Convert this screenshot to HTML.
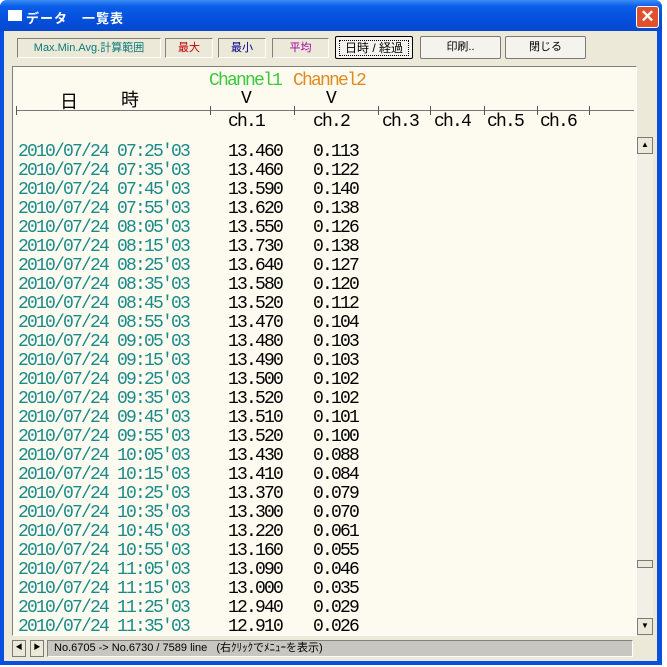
<!DOCTYPE html>
<html><head><meta charset="utf-8"><style>
*{margin:0;padding:0;box-sizing:border-box}
body{width:667px;height:667px;overflow:hidden;background:#fff;position:relative;font-family:"Liberation Sans","Noto Sans CJK JP",sans-serif}
.abs{position:absolute}
#win{left:0;top:0;width:662px;height:665px;background:#0a4ee0;border-radius:7px 7px 0 0}
#title{left:0;top:0;width:662px;height:31px;border-radius:7px 7px 0 0;background:linear-gradient(#3d8df5 0%,#0a5ee8 20%,#0550dc 60%,#0548d0 100%)}
#body{left:4px;top:31px;width:653px;height:630px;background:#ece9d8}
.t{font-size:13px;font-weight:bold;color:#fff;left:26px;top:8px;letter-spacing:1px}
.box{height:20px;background:#ece9d8;border:1px solid;border-color:#808080 #fff #fff #808080;font-size:11px;text-align:center;line-height:18px}
.btn{height:23px;background:#f4f3ee;border:1px solid #7a7a7a;border-radius:2px;font-size:11px;text-align:center;line-height:21px;color:#000}
.mono{font-family:"Liberation Mono","Noto Sans CJK JP",monospace;font-size:18px;letter-spacing:-1.8px;line-height:19px;white-space:pre}
#panel{left:12px;top:66px;width:625px;height:570px;background:#fdfbef;border:1px solid;border-color:#808080 #fff #fff #808080}
.tick{width:1px;height:9px;background:#555;top:106px}
</style></head><body>
<div id="win" class="abs"></div>
<div id="title" class="abs"></div>
<div class="abs" style="left:8px;top:10px;width:14px;height:11px;background:#fff"></div>
<div class="abs t">データ　一覧表</div>
<div class="abs" style="left:636px;top:6px;width:23px;height:22px;background:#e0502c;border:1px solid #fff;border-radius:3px;color:#fff;font-size:17px;font-weight:bold;text-align:center;line-height:20px">✕</div>
<div id="body" class="abs"></div>
<div class="abs box" style="left:17px;top:38px;width:144px;color:#0a7a7a">Max.Min.Avg.計算範囲</div>
<div class="abs box" style="left:165px;top:38px;width:48px;color:#c00000">最大</div>
<div class="abs box" style="left:218px;top:38px;width:48px;color:#00008b">最小</div>
<div class="abs box" style="left:272px;top:38px;width:57px;color:#a000a0">平均</div>
<div class="abs btn" style="left:335px;top:36px;width:78px;border:1px solid #000;"><div style="margin:3px;border:1px dotted #000;line-height:14px;font-size:12px">日時 / 経過</div></div>
<div class="abs btn" style="left:420px;top:36px;width:81px">印刷..</div>
<div class="abs btn" style="left:505px;top:36px;width:81px">閉じる</div>
<div id="panel" class="abs"></div>
<div class="abs mono" style="left:209px;top:72px;color:#3cc83c">Channel1</div>
<div class="abs mono" style="left:293px;top:72px;color:#e08a1e">Channel2</div>
<div class="abs mono" style="left:241px;top:90px;color:#000">V</div>
<div class="abs mono" style="left:326px;top:90px;color:#000">V</div>
<div class="abs" style="left:60px;top:91px;font-size:18px;color:#000;font-family:'Noto Sans CJK JP',sans-serif;line-height:20px">日</div>
<div class="abs" style="left:121px;top:89px;font-size:18px;color:#000;font-family:'Noto Sans CJK JP',sans-serif;line-height:20px">時</div>
<div class="abs" style="left:16px;top:110px;width:618px;height:1px;background:#777"></div>
<div class="abs tick" style="left:16px"></div><div class="abs tick" style="left:210px"></div><div class="abs tick" style="left:294px"></div><div class="abs tick" style="left:378px"></div><div class="abs tick" style="left:430px"></div><div class="abs tick" style="left:484px"></div><div class="abs tick" style="left:537px"></div><div class="abs tick" style="left:589px"></div>
<div class="abs mono" style="left:228px;top:113px;color:#000">ch.1</div>
<div class="abs mono" style="left:313px;top:113px;color:#000">ch.2</div>
<div class="abs mono" style="left:382px;top:113px;color:#000">ch.3</div>
<div class="abs mono" style="left:434px;top:113px;color:#000">ch.4</div>
<div class="abs mono" style="left:487px;top:113px;color:#000">ch.5</div>
<div class="abs mono" style="left:540px;top:113px;color:#000">ch.6</div>
<div class="abs mono" style="left:18px;top:143px;color:#1a8a8a">2010/07/24 07:25'03
2010/07/24 07:35'03
2010/07/24 07:45'03
2010/07/24 07:55'03
2010/07/24 08:05'03
2010/07/24 08:15'03
2010/07/24 08:25'03
2010/07/24 08:35'03
2010/07/24 08:45'03
2010/07/24 08:55'03
2010/07/24 09:05'03
2010/07/24 09:15'03
2010/07/24 09:25'03
2010/07/24 09:35'03
2010/07/24 09:45'03
2010/07/24 09:55'03
2010/07/24 10:05'03
2010/07/24 10:15'03
2010/07/24 10:25'03
2010/07/24 10:35'03
2010/07/24 10:45'03
2010/07/24 10:55'03
2010/07/24 11:05'03
2010/07/24 11:15'03
2010/07/24 11:25'03
2010/07/24 11:35'03</div>
<div class="abs mono" style="left:228px;top:143px;color:#000">13.460
13.460
13.590
13.620
13.550
13.730
13.640
13.580
13.520
13.470
13.480
13.490
13.500
13.520
13.510
13.520
13.430
13.410
13.370
13.300
13.220
13.160
13.090
13.000
12.940
12.910</div>
<div class="abs mono" style="left:313px;top:143px;color:#000">0.113
0.122
0.140
0.138
0.126
0.138
0.127
0.120
0.112
0.104
0.103
0.103
0.102
0.102
0.101
0.100
0.088
0.084
0.079
0.070
0.061
0.055
0.046
0.035
0.029
0.026</div>
<div class="abs" style="left:637px;top:137px;width:16px;height:498px;background:#f1efe6"></div>
<div class="abs btn" style="left:637px;top:137px;width:16px;height:17px;line-height:14px;font-size:8px;border-radius:0;background:#ece9d8">▲</div>
<div class="abs btn" style="left:637px;top:560px;width:16px;height:8px;border-radius:0;background:#ece9d8"></div>
<div class="abs btn" style="left:637px;top:618px;width:16px;height:17px;line-height:14px;font-size:8px;border-radius:0;background:#ece9d8">▼</div>
<div class="abs btn" style="left:12px;top:640px;width:14px;height:17px;line-height:14px;font-size:7px;border-radius:0;background:#ece9d8">◀</div>
<div class="abs btn" style="left:30px;top:640px;width:14px;height:17px;line-height:14px;font-size:7px;border-radius:0;background:#ece9d8">▶</div>
<div class="abs" style="left:47px;top:640px;width:586px;height:17px;background:#c8c6c0;border:1px solid;border-color:#808080 #fff #fff #808080;font-size:11px;line-height:15px;padding-left:6px;white-space:pre">No.6705 -&gt; No.6730 / 7589 line   (右ｸﾘｯｸでﾒﾆｭｰを表示)</div>
</body></html>
